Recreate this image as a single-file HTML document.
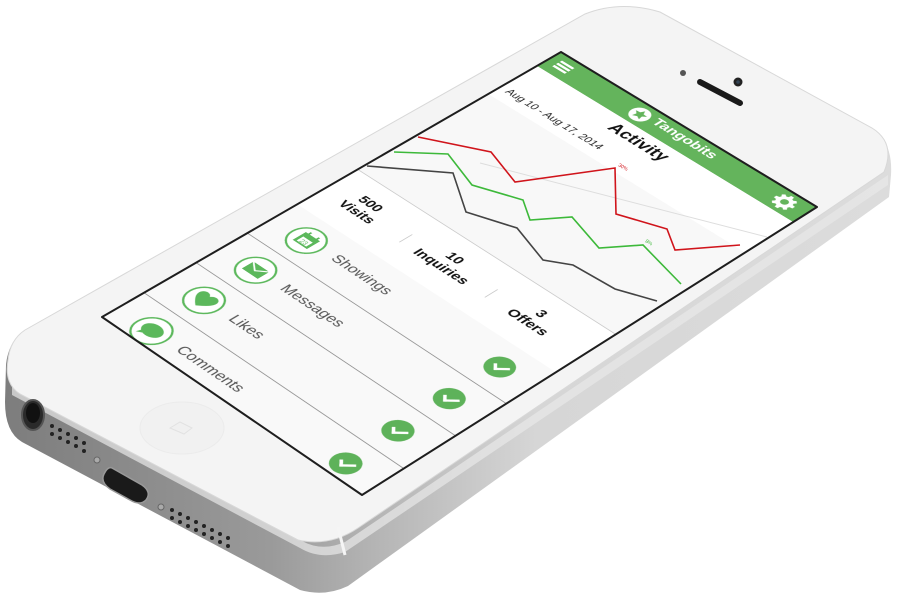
<!DOCTYPE html>
<html><head><meta charset="utf-8">
<style>
html,body{margin:0;padding:0;background:#fff;}
body{width:902px;height:600px;position:relative;overflow:hidden;font-family:"Liberation Sans",sans-serif;}
#phone{position:absolute;left:0;top:0;}
#scr{position:absolute;left:0;top:0;width:320px;height:568px;overflow:hidden;background:#f8f8f8;
transform-origin:0 0;transform:matrix3d(0.71375,0.4625,0,-0.000105625,-0.82148,0.425,0,-0.00013121,0,0,1,0,561,52,0,1);}
.hdr{position:absolute;left:0;top:0;width:320px;height:32px;background:#64b45c;}
.ham{position:absolute;left:10px;top:9px;width:16px;height:3px;background:#fff;box-shadow:0 5px 0 #fff,0 10px 0 #fff;}
.title{position:absolute;left:132px;top:5px;color:#fff;font-weight:bold;font-size:16px;}
.act{position:absolute;left:0;top:32px;width:320px;height:64px;background:#fff;}
.abs{position:absolute;}
.stat{position:absolute;top:262px;height:74px;width:320px;background:#fff;border-top:1px solid #ccc;border-bottom:1px solid #bbb;}
.sv{position:absolute;top:18px;width:96px;text-align:center;font-weight:bold;font-size:15px;line-height:17px;color:#111;}
.row{position:absolute;left:0;width:320px;height:60px;border-bottom:1px solid #999;background:#f9f9f9;}
.ic{position:absolute;left:24px;top:11px;width:34px;height:34px;border:2px solid #5cb85c;border-radius:50%;background:#fff;}
.lbl{position:absolute;left:76px;top:20px;font-size:16px;color:#555;}
.ck{position:absolute;left:268px;top:16px;width:28px;height:28px;border-radius:50%;background:#5eb25a;}
.ck:after{content:"";position:absolute;left:8px;top:8px;width:11px;height:6px;border-left:3px solid #fff;border-bottom:3px solid #fff;transform:rotate(-45deg);}
</style></head><body>
<svg id="phone" width="902" height="600" viewBox="0 0 902 600">
<defs>
<linearGradient id="band" x1="0" y1="0" x2="1" y2="0">
<stop offset="0" stop-color="#7d7d7d"/><stop offset="0.3" stop-color="#9a9a9a"/><stop offset="0.42" stop-color="#b5b5b5"/><stop offset="0.6" stop-color="#d6d6d6"/><stop offset="1" stop-color="#dcdcdc"/>
</linearGradient>
</defs>
<path d="M25,330 L585,14 Q620,0 660,12 L872,128 Q893,142 891,175 L889,197 L348,586 Q325,597 300,590 L22,442 Q5,432 5,402 L6,365 Q8,342 25,330 Z" fill="url(#band)"/>
<path d="M12,395 L300,548 Q320,560 345,552 L888,185 L888,175 L345,542 Q322,552 302,541 L12,386 Z" fill="#e8e8e8" opacity="0.7"/>
<path d="M25,330 L585,14 Q620,0 660,12 L872,128 Q896,143 884,172 L358,528 Q330,547 298,540 L20,394 Q4,384 8,360 Q10,340 25,330 Z" fill="#f4f4f4" stroke="#d8d8d8" stroke-width="1"/>
<ellipse cx="33" cy="415" rx="11" ry="15" fill="#2a2a2a" stroke="#555" stroke-width="2"/>
<ellipse cx="33" cy="413" rx="7" ry="10" fill="#111"/>
<g fill="#222">
<circle cx="52" cy="426" r="2"/><circle cx="60" cy="430" r="2"/><circle cx="68" cy="434" r="2"/><circle cx="76" cy="438" r="2"/><circle cx="84" cy="443" r="2"/>
<circle cx="52" cy="434" r="2"/><circle cx="60" cy="438" r="2"/><circle cx="68" cy="442" r="2"/><circle cx="76" cy="446" r="2"/><circle cx="84" cy="451" r="2"/>
<circle cx="172" cy="510" r="2"/><circle cx="180" cy="514" r="2"/><circle cx="188" cy="518" r="2"/><circle cx="196" cy="522" r="2"/><circle cx="204" cy="526" r="2"/><circle cx="212" cy="530" r="2"/><circle cx="220" cy="534" r="2"/><circle cx="228" cy="538" r="2"/>
<circle cx="172" cy="518" r="2"/><circle cx="180" cy="522" r="2"/><circle cx="188" cy="526" r="2"/><circle cx="196" cy="530" r="2"/><circle cx="204" cy="534" r="2"/><circle cx="212" cy="538" r="2"/><circle cx="220" cy="542" r="2"/><circle cx="228" cy="546" r="2"/>
</g>
<circle cx="97" cy="460" r="3" fill="#aaa" stroke="#666"/><circle cx="161" cy="507" r="3" fill="#aaa" stroke="#666"/>
<path d="M112,468 L142,485 Q152,492 146,500 Q140,506 130,500 L110,489 Q100,482 104,474 Q108,466 112,468 Z" fill="#1a1a1a" stroke="#999" stroke-width="1.5"/>
<path d="M338,527 L345,555" stroke="#f5f5f5" stroke-width="3"/>
<ellipse cx="182" cy="428" rx="42" ry="26" fill="#f1f1f1" stroke="#ebebeb"/>
<path d="M170,428 L180,422 L192,428 L184,434 Z" fill="#f0f0f0" stroke="#e2e2e2"/>
<path d="M700,82 L740,103" stroke="#1a1a1a" stroke-width="6" stroke-linecap="round"/>
<circle cx="738" cy="82" r="4.5" fill="#222"/><circle cx="738" cy="82" r="1.8" fill="#345"/>
<circle cx="683" cy="73" r="3" fill="#555"/>
<path d="M585,343 L655,305" stroke="#d9d9d9" stroke-width="9" stroke-linecap="round" fill="none"/>
<path d="M585,343 L655,305" stroke="#f0f0f0" stroke-width="6" stroke-linecap="round" fill="none"/>
<circle cx="585" cy="347" r="2.5" fill="#222"/>
</svg>

<div id="scr">
  <div class="hdr">
    <div class="ham"></div>
    <svg class="abs" style="left:105px;top:5px" width="23" height="23" viewBox="0 0 24 24"><circle cx="12" cy="12" r="11" fill="#fff"/><path d="M12 4.5l2.2 4.6 5 .6-3.7 3.4 1 5-4.5-2.5-4.5 2.5 1-5-3.7-3.4 5-.6z" fill="#64b45c"/></svg>
    <div class="title">Tangobits</div>
    <svg class="abs" style="left:283px;top:4px" width="24" height="24" viewBox="0 0 24 24"><path fill="#fff" d="M10.3 1h3.4l.5 3 2 .9 2.5-1.8 2.4 2.4-1.8 2.5.9 2 3 .5v3.4l-3 .5-.9 2 1.8 2.5-2.4 2.4-2.5-1.8-2 .9-.5 3h-3.4l-.5-3-2-.9-2.5 1.8-2.4-2.4 1.8-2.5-.9-2-3-.5v-3.4l3-.5.9-2-1.8-2.5 2.4-2.4 2.5 1.8 2-.9z"/><circle cx="12" cy="12" r="4" fill="#64b45c"/></svg>
  </div>
  <div class="act">
    <div class="abs" style="left:110px;top:6px;font-weight:bold;font-size:19px;color:#111;">Activity</div>
    <div class="abs" style="left:8px;top:40px;font-size:12px;color:#222;">Aug 10 - Aug 17, 2014</div>
  </div>
  <div class="stat">
    <div class="sv" style="left:-4px">500<br>Visits</div>
    <div class="sv" style="left:102px">10<br>Inquiries</div>
    <div class="sv" style="left:208px">3<br>Offers</div>
    <div class="abs" style="left:100px;top:30px;width:1px;height:16px;background:#ccc"></div>
    <div class="abs" style="left:206px;top:30px;width:1px;height:16px;background:#ccc"></div>
  </div>
  <div class="row" style="top:337px">
    <div class="ic"><svg width="34" height="34" viewBox="0 0 34 34"><rect x="8" y="9" width="18" height="16" fill="#5cb85c"/><rect x="11" y="15" width="12" height="8" fill="#fff"/><rect x="11" y="6" width="2" height="5" fill="#5cb85c"/><rect x="21" y="6" width="2" height="5" fill="#5cb85c"/><text x="17" y="22.5" font-size="7" text-anchor="middle" fill="#5cb85c" font-family="Liberation Sans">23</text></svg></div>
    <div class="lbl">Showings</div><div class="ck"></div>
  </div>
  <div class="row" style="top:398px">
    <div class="ic"><svg width="34" height="34" viewBox="0 0 34 34"><rect x="7" y="10" width="20" height="14" fill="#5cb85c"/><path d="M7 10l10 8 10-8" stroke="#fff" stroke-width="1.5" fill="none"/></svg></div>
    <div class="lbl">Messages</div><div class="ck"></div>
  </div>
  <div class="row" style="top:459px">
    <div class="ic"><svg width="34" height="34" viewBox="0 0 34 34"><path d="M17 27C8 20 6 16 6 12.5 6 9.5 8.5 7 11.5 7c2.3 0 4.3 1.4 5.5 3.2C18.2 8.4 20.2 7 22.5 7 25.5 7 28 9.5 28 12.5 28 16 26 20 17 27z" fill="#5cb85c"/></svg></div>
    <div class="lbl">Likes</div><div class="ck"></div>
  </div>
  <div class="row" style="top:520px">
    <div class="ic"><svg width="34" height="34" viewBox="0 0 34 34"><ellipse cx="17" cy="16" rx="11" ry="8.5" fill="#5cb85c"/><path d="M10 21l-2 6 7-4z" fill="#5cb85c"/></svg></div>
    <div class="lbl">Comments</div><div class="ck"></div>
  </div>
</div>

<svg class="abs" style="left:0;top:0;position:absolute" width="902" height="600" viewBox="0 0 902 600">
<path d="M480,163 L767,237" stroke="#ddd" stroke-width="1"/>
<polyline points="418,137 491,152 515,182 615,168 616,214 667,229 675,250 740,245" fill="none" stroke="#d0141b" stroke-width="1.6"/>
<polyline points="394,152 448,154 472,185 523,200 530,220 572,217 599,248 643,245 681,284" fill="none" stroke="#3db93a" stroke-width="1.6"/>
<polyline points="367,166 453,173 466,212 517,228 543,260 573,265 615,289 657,301" fill="none" stroke="#444" stroke-width="1.6"/>
<text x="618" y="166" font-size="5" fill="#d0141b" font-family="Liberation Sans" transform="rotate(30 618 166)">30%</text>
<text x="645" y="242" font-size="5" fill="#3db93a" font-family="Liberation Sans" transform="rotate(30 645 242)">8%</text>
<path d="M561,52 L817,207 L362,495 L102,317 Z" fill="none" stroke="#1e1e1e" stroke-width="2" stroke-linejoin="round"/>
</svg>
</body></html>
